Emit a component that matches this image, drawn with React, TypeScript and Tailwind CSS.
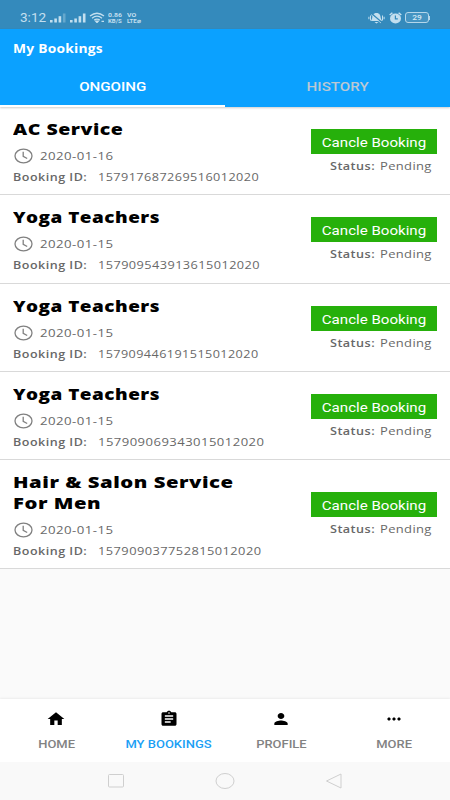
import type { ReactNode } from "react";
import clsx from "clsx";

const bookings = [
  { title: ["AC Service"], date: "2020-01-16", id: "157917687269516012020", height: "h-[88px]", idScale: "scale-x-[1.1]", titleScale: "scale-x-[1.26]" },
  { title: ["Yoga Teachers"], date: "2020-01-15", id: "157909543913615012020", height: "h-[89px]", idScale: "scale-x-[1.106]", titleScale: "scale-x-[1.22]" },
  { title: ["Yoga Teachers"], date: "2020-01-15", id: "157909446191515012020", height: "h-[88px]", idScale: "scale-x-[1.096]", titleScale: "scale-x-[1.22]" },
  { title: ["Yoga Teachers"], date: "2020-01-15", id: "157909069343015012020", height: "h-[88px]", idScale: "scale-x-[1.136]", titleScale: "scale-x-[1.22]" },
  { title: ["Hair & Salon Service", "For Men"], date: "2020-01-15", id: "157909037752815012020", height: "h-[109px]", idScale: "scale-x-[1.116]", titleScale: "scale-x-[1.31]" }
];

const tabs = [
  { label: "HOME", icon: <path d="M10 20v-6h4v6h5v-8h3L12 3 2 12h3v8z" /> },
  {
    label: "MY BOOKINGS",
    active: true,
    icon: <path d="M19 3h-4.18C14.4 1.84 13.3 1 12 1s-2.4.84-2.82 2H5c-1.1 0-2 .9-2 2v14c0 1.1.9 2 2 2h14c1.1 0 2-.9 2-2V5c0-1.1-.9-2-2-2zm-7 0c.55 0 1 .45 1 1s-.45 1-1 1-1-.45-1-1 .45-1 1-1zm2 14H7v-2h7v2zm3-4H7v-2h10v2zm0-4H7V7h10v2z" />
  },
  { label: "PROFILE", icon: <path d="M12 12c2.21 0 4-1.79 4-4s-1.79-4-4-4-4 1.79-4 4 1.79 4 4 4zm0 2c-2.67 0-8 1.34-8 4v2h16v-2c0-2.66-5.33-4-8-4z" /> },
  { label: "MORE", icon: <path d="M6 10c-1.1 0-2 .9-2 2s.9 2 2 2 2-.9 2-2-.9-2-2-2zm12 0c-1.1 0-2 .9-2 2s.9 2 2 2 2-.9 2-2-.9-2-2-2zm-6 0c-1.1 0-2 .9-2 2s.9 2 2 2 2-.9 2-2-.9-2-2-2z" /> }
];

function Wide({ className, children }: { className?: string; children: ReactNode }) {
  return <span className={clsx("inline-block whitespace-nowrap", className)}>{children}</span>;
}

function Signal({ weak }: { weak?: boolean }) {
  return (
    <svg width="16" height="10" viewBox="0 0 16 10" fill="#c3dfef">
      <rect x="0" y="7" width="2.6" height="2.5" />
      <rect x="4.3" y="5.5" width="2.6" height="4" />
      <rect x="8.6" y="3.2" width="2.6" height="6.3" />
      <rect x="12.9" y="0.5" width="2.6" height="9" opacity={weak ? 0.35 : 1} />
    </svg>
  );
}

function StatusBar() {
  return (
    <div className="flex h-[29px] items-center bg-[#348abc] pt-[6px] pl-[20px] pr-[20px] font-[Roboto] text-[#c3dfef]">
      <Wide className="w-[30px] origin-left scale-x-[1.13] text-[12px] leading-none">3:12</Wide>
      <Signal weak />
      <span className="w-[4px]" />
      <Signal />
      <svg className="ml-[3px]" width="16" height="11" viewBox="0 0 16 11" fill="none" stroke="#c3dfef" strokeWidth="1.3">
        <path d="M1 4Q8-1.5 15 4M3 6.2Q8 2.2 13 6.2M5.2 8.1Q8 6 10.8 8.1" />
        <path d="M6.7 9.1L8 10.6 9.3 9.1zM12.5 9.3h2.5" />
      </svg>
      <div className="ml-[3px] w-[15px] text-[5.5px] leading-[6px] font-bold">
        <Wide className="block origin-left scale-x-[1.25]">0.86</Wide>
        <Wide className="block origin-left scale-x-[1.1]">KB/S</Wide>
      </div>
      <div className="ml-[4px] w-[16px] text-[5.5px] leading-[6px] font-bold">
        <Wide className="block origin-left scale-x-[1.25]">VO</Wide>
        <Wide className="block origin-left scale-x-[1.1]">LTE⌀</Wide>
      </div>
      <svg className="ml-auto" width="17" height="12" viewBox="0 0 17 12">
        <path d="M8.5 1C5.5 1 4.4 3.3 4.2 6L3 9h11l-1.3-3C12.6 3.3 11.5 1 8.5 1zM6.5 10h4L8.5 11.5zM.4 4.8h1v2.4h-1zM2 3.5h1v5H2zM15.6 4.8h1v2.4h-1zM14 3.5h1v5h-1z" fill="#c3dfef" />
        <path d="M3.5 1.5l10.5 9" stroke="#348abc" strokeWidth="1.5" />
        <path d="M3 2.5l10 8.5" stroke="#c3dfef" strokeWidth=".8" />
      </svg>
      <svg className="ml-[4px]" width="13" height="12" viewBox="0 0 13 12">
        <ellipse cx="6.5" cy="6.5" rx="5.5" ry="5" fill="#c3dfef" />
        <path d="M.7 3L3.4.7M12.3 3L9.6.7" stroke="#c3dfef" strokeWidth="1.5" />
        <path d="M6.4 3.5v3.3h2.4" fill="none" stroke="#348abc" strokeWidth="1.2" />
      </svg>
      <div className="ml-[3px] flex h-[11px] w-[24px] items-center justify-center rounded-[3px] border border-[#b4d6ea] bg-[#4594c2] pt-px">
        <Wide className="scale-x-[1.2] text-[7px] leading-none font-medium text-[#d5e9f4]">29</Wide>
      </div>
      <span className="h-[4px] w-px bg-[#b4d6ea]" />
    </div>
  );
}

function Header() {
  return (
    <header className="relative z-10 h-[78px] bg-[#0ba1ff] shadow-[0_1px_2px_rgba(0,0,0,0.2)]">
      <div className="h-[38px] pt-[6px] pl-[13px]">
        <Wide className="origin-left scale-x-[1.15] font-['Open_Sans'] text-[12px] leading-[20px] font-bold tracking-[0.2px] text-white">My Bookings</Wide>
      </div>
      <div className="grid h-[40px] grid-cols-2 font-[Roboto] text-[12.5px] font-medium">
        <div className="flex items-center justify-center border-b-2 border-white pt-[3px] text-white">
          <Wide className="scale-x-[1.21]">ONGOING</Wide>
        </div>
        <div className="flex items-center justify-center border-b-2 border-transparent pt-[3px] text-[#bcc8d4]">
          <Wide className="scale-x-[1.21]">HISTORY</Wide>
        </div>
      </div>
    </header>
  );
}

function BookingRow({ booking }: { booking: (typeof bookings)[number] }) {
  return (
    <div className={clsx("flex justify-between border-b border-[#d9d9d9] bg-white pr-[13px] pl-[13px] font-['Open_Sans'] text-[#686868]", booking.height)}>
      <div className="pt-[12px]">
        {booking.title.map((line) => (
          <h2 key={line} className="h-[21px] text-[15.5px] leading-[21px] font-extrabold text-black">
            <Wide className={clsx("origin-left tracking-[0.4px]", booking.titleScale)}>{line}</Wide>
          </h2>
        ))}
        <div className="mt-[6px] flex h-[20px] items-center text-[11.5px]">
          <svg className="ml-[1px]" width="19" height="16" viewBox="0 0 19 16" fill="none" stroke="#808080" strokeWidth="1.3">
            <ellipse cx="9.5" cy="8" rx="8.5" ry="6.9" />
            <path d="M9.2 3.8v4.5l4 2.2" />
          </svg>
          <Wide className="ml-[7px] origin-left scale-x-[1.15] tracking-[0.4px]">{booking.date}</Wide>
        </div>
        <div className="flex h-[20px] items-center pt-px text-[11.5px]">
          <Wide className="w-[85px] origin-left scale-x-[1.09] font-semibold tracking-[0.45px]">Booking ID:</Wide>
          <Wide className={clsx("origin-left tracking-[0.4px]", booking.idScale)}>{booking.id}</Wide>
        </div>
      </div>
      <div className={clsx("flex flex-col items-end", booking.title.length > 1 ? "pt-[32px]" : "pt-[22px]")}>
        <button className="flex h-[25px] w-[126px] items-center justify-center bg-[#26b00b] pt-[2px] font-[Roboto] text-[13px] text-white">
          <Wide className="scale-x-[1.16]">Cancle Booking</Wide>
        </button>
        <div className="flex h-[24px] w-[107px] items-center text-[11.5px]">
          <Wide className="w-[50px] origin-left scale-x-[1.1] font-semibold tracking-[0.4px]">Status:</Wide>
          <Wide className="origin-left scale-x-[1.13] tracking-[0.3px]">Pending</Wide>
        </div>
      </div>
    </div>
  );
}

export default function App() {
  return (
    <div className="flex h-[800px] w-[450px] flex-col overflow-hidden bg-[#fafafa]">
      <StatusBar />
      <Header />
      <main className="flex-1">
        {bookings.map((booking) => (
          <BookingRow key={booking.id} booking={booking} />
        ))}
      </main>
      <nav className="grid h-[63px] grid-cols-4 bg-white shadow-[0_-1px_2px_rgba(0,0,0,0.06)]">
        {tabs.map((tab) => (
          <div key={tab.label} className="flex flex-col items-center pt-[11px]">
            <svg width="20" height="18" viewBox="0 0 24 24" preserveAspectRatio="none">
              {tab.icon}
            </svg>
            <Wide className={clsx("mt-[8px] scale-x-[1.18] font-[Roboto] text-[11px] leading-[18px] font-medium", tab.active ? "text-[#1b9ff5]" : "text-[#828282]")}>{tab.label}</Wide>
          </div>
        ))}
      </nav>
      <div className="flex h-[38px] items-center justify-center gap-[90px] bg-[#f9f9f9]">
        <svg width="18" height="18" viewBox="0 0 18 18" fill="none" stroke="#cfcfcf">
          <rect x="1.5" y="2.5" width="15" height="12.5" rx="1" />
        </svg>
        <svg width="20" height="18" viewBox="0 0 20 18" fill="none" stroke="#cfcfcf">
          <ellipse cx="10" cy="9" rx="9" ry="7.5" />
        </svg>
        <svg width="18" height="18" viewBox="0 0 18 18" fill="none" stroke="#cfcfcf" strokeLinejoin="round">
          <path d="M16 2v14L1.5 9z" />
        </svg>
      </div>
    </div>
  );
}
